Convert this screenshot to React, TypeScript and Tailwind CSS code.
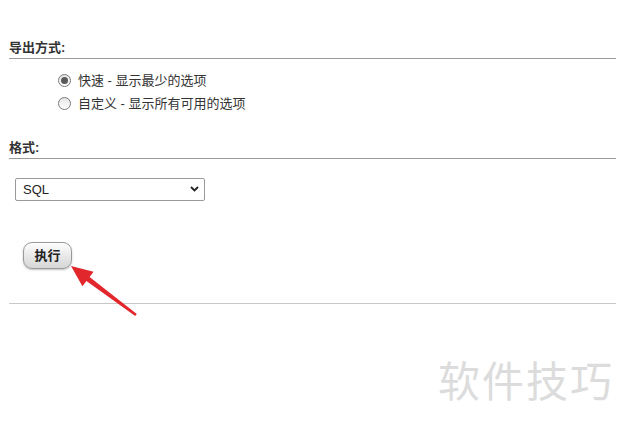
import React from 'react'

const Radio = ({ checked }: { checked?: boolean }) => (
  <span className="flex h-[13px] w-[13px] items-center justify-center rounded-full border border-[#7a7a7a] bg-gradient-to-b from-[#e6e6e6] to-white">
    {checked && <span className="h-[7px] w-[7px] rounded-full bg-[#5a5a5a]" />}
  </span>
)

const SectionTitle = ({ children }: { children: React.ReactNode }) => (
  <div className="ml-[9px] mr-[1px] border-b border-[#9a9a9a] pb-[2px] text-[13px] leading-[16px] font-bold text-[#333]">
    {children}
  </div>
)

export default function App() {
  return (
    <div className="relative h-[427px] w-[617px] overflow-hidden bg-white font-['Liberation_Sans','Noto_Sans_CJK_SC',sans-serif] text-[#333]">
      <div className="pt-[40px]">
        <SectionTitle>导出方式:</SectionTitle>

        <div className="ml-[58px] mt-[15px] flex flex-col gap-[10px] text-[13px] leading-[13px]">
          <label className="flex items-center gap-[7px]">
            <Radio checked />
            <span>快速 - 显示最少的选项</span>
          </label>
          <label className="flex items-center gap-[7px]">
            <Radio />
            <span>自定义 - 显示所有可用的选项</span>
          </label>
        </div>

        <div className="mt-[30px]">
          <SectionTitle>格式:</SectionTitle>
        </div>

        <div className="relative ml-[15px] mt-[19px] h-[23px] w-[190px]">
          <div className="flex h-full w-full items-center rounded-[2px] border border-[#9a9a9a] bg-white pl-[7px] text-[13px] text-[#222]">
            SQL
          </div>
          <svg className="absolute right-[6px] top-[8px]" width="9" height="6" viewBox="0 0 9 6">
            <path d="M1 1 L4.5 4.5 L8 1" fill="none" stroke="#222" strokeWidth="1.8" />
          </svg>
        </div>

        <button className="ml-[23px] mt-[41px] flex h-[27px] w-[49px] items-center justify-center rounded-[9px] border border-[#9a9a9a] bg-gradient-to-b from-[#fdfdfd] to-[#d6d6d6] text-[13px] font-bold text-[#222] shadow-[0_1px_2px_rgba(0,0,0,0.25)]">
          执行
        </button>

        <div className="ml-[9px] mr-[1px] mt-[34px] border-t border-[#c8c8c8]" />
      </div>

      {/* 红色箭头 */}
      <svg className="pointer-events-none absolute left-0 top-0" width="617" height="427">
        <polygon
          points="71,266 93.5,271.8 89.6,277 136.8,314 135.2,316 86.4,281 82.4,286.2"
          fill="#e1262c"
        />
      </svg>

      {/* 水印 */}
      <div className="pointer-events-none absolute left-[438px] top-[354px] text-[42px] leading-[50px] tracking-[2px] text-[#dcdcdc] font-['Noto_Sans_CJK_SC',sans-serif]">
        软件技巧
      </div>
    </div>
  )
}
